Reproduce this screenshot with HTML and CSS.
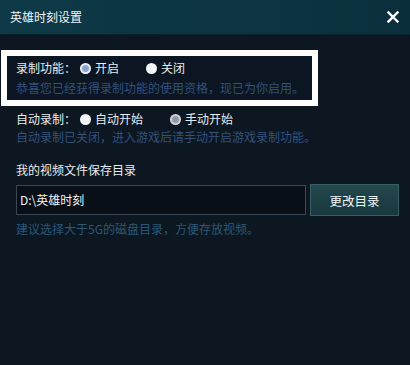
FILE: index.html
```html
<!DOCTYPE html>
<html>
<head>
    <meta charset="UTF-8">
    <title>英雄时刻设置</title>
    <link rel="stylesheet" href="styles.css">
</head>
<body>
    <div class="dialog">
        <!-- 标题栏 -->
        <div class="titlebar">
            <span class="title">英雄时刻设置</span>
            <button class="close-btn">
                <svg width="12" height="12" viewBox="0 0 12 12">
                    <path d="M1.5 1.5 L10.5 10.5 M10.5 1.5 L1.5 10.5" stroke="#fff" stroke-width="2.4" stroke-linecap="square"/>
                </svg>
            </button>
        </div>

        <div class="content">
            <!-- 录制功能 -->
            <div class="section highlight">
                <div class="row">
                    <span class="label">录制功能：</span>
                    <label class="radio"><span class="dot checked"></span>开启</label>
                    <label class="radio"><span class="dot"></span>关闭</label>
                </div>
                <div class="hint">恭喜您已经获得录制功能的使用资格，现已为你启用。</div>
            </div>

            <!-- 自动录制 -->
            <div class="section auto">
                <div class="row">
                    <span class="label">自动录制：</span>
                    <label class="radio"><span class="dot"></span>自动开始</label>
                    <label class="radio"><span class="dot grey"></span>手动开始</label>
                </div>
                <div class="hint">自动录制已关闭，进入游戏后请手动开启游戏录制功能。</div>
            </div>

            <!-- 保存目录 -->
            <div class="section folder">
                <div class="row">我的视频文件保存目录</div>
                <div class="path-row">
                    <div class="path-input">D:\英雄时刻</div>
                    <button class="change-btn">更改目录</button>
                </div>
                <div class="hint teal">建议选择大于5G的磁盘目录，方便存放视频。</div>
            </div>
        </div>
    </div>
</body>
</html>
```

FILE: styles.css
```css
* {
    margin: 0;
    padding: 0;
    box-sizing: border-box;
}

body {
    font-family: "Noto Sans CJK SC", "Noto Sans", sans-serif;
    font-size: 12px;
    background: #0c1721;
    color: #e8ecef;
    width: 410px;
    height: 365px;
    overflow: hidden;
}

.dialog {
    height: 365px;
    background: #0c1721;
}

/* 标题栏 */
.titlebar {
    height: 35px;
    display: flex;
    align-items: center;
    justify-content: space-between;
    padding: 0 10px 1px 10px;
    background: linear-gradient(90deg, #0e3947 0%, #0c3543 45%, #0c3342 75%, #0b2e3c 100%);
    border-bottom: 1px solid #08202a;
}

.title {
    font-size: 12px;
    color: #f0f4f6;
    line-height: 16px;
}

.close-btn {
    background: none;
    border: none;
    width: 12px;
    height: 12px;
    margin-right: 1px;
    display: flex;
}

.content {
    padding-top: 15px;
}

.section {
    padding-left: 16px;
}

.row {
    display: flex;
    align-items: center;
    height: 18px;
    line-height: 18px;
    white-space: nowrap;
}

.label {
    margin-right: 4px;
}

.radio {
    display: flex;
    align-items: center;
    margin-right: 27px;
}

.dot {
    width: 11px;
    height: 11px;
    border-radius: 50%;
    background: #f4f6f8;
    margin-right: 4px;
}

.dot.checked {
    background: radial-gradient(circle, #7f9dcc 0, #8ea9d4 3px, #dfe7f2 4px, #ffffff 5.5px);
}

.dot.grey {
    background: radial-gradient(circle, #8c949d 0, #949ca5 3px, #c6ccd2 4px, #d8dde2 5.5px);
}

.hint {
    height: 18px;
    line-height: 18px;
    color: #34507c;
    white-space: nowrap;
}

.hint.teal {
    color: #2b5877;
}

/* 高亮框 */
.highlight {
    margin-left: 1px;
    width: 317px;
    padding: 2px 0 2px 9px;
    border: 6px solid #ffffff;
    background: #0b1622;
}

.highlight .row,
.highlight .hint {
    height: 20px;
    line-height: 20px;
}

.auto {
    margin-top: 4px;
}

.folder {
    margin-top: 15px;
}

.path-row {
    display: flex;
    align-items: center;
    margin-top: 5px;
}

.path-input {
    width: 290px;
    height: 30px;
    line-height: 28px;
    padding-left: 3px;
    background: #080f16;
    border: 1px solid #3a4856;
    color: #f2f4f6;
}

.change-btn {
    width: 89px;
    height: 32px;
    margin-left: 4px;
    background: linear-gradient(180deg, #24494f 0%, #1d3f46 50%, #183840 100%);
    border: 1px solid #3b5c63;
    color: #f2f6f7;
    font-family: inherit;
    font-size: 12.5px;
}

.folder .hint {
    margin-top: 4px;
}
```
